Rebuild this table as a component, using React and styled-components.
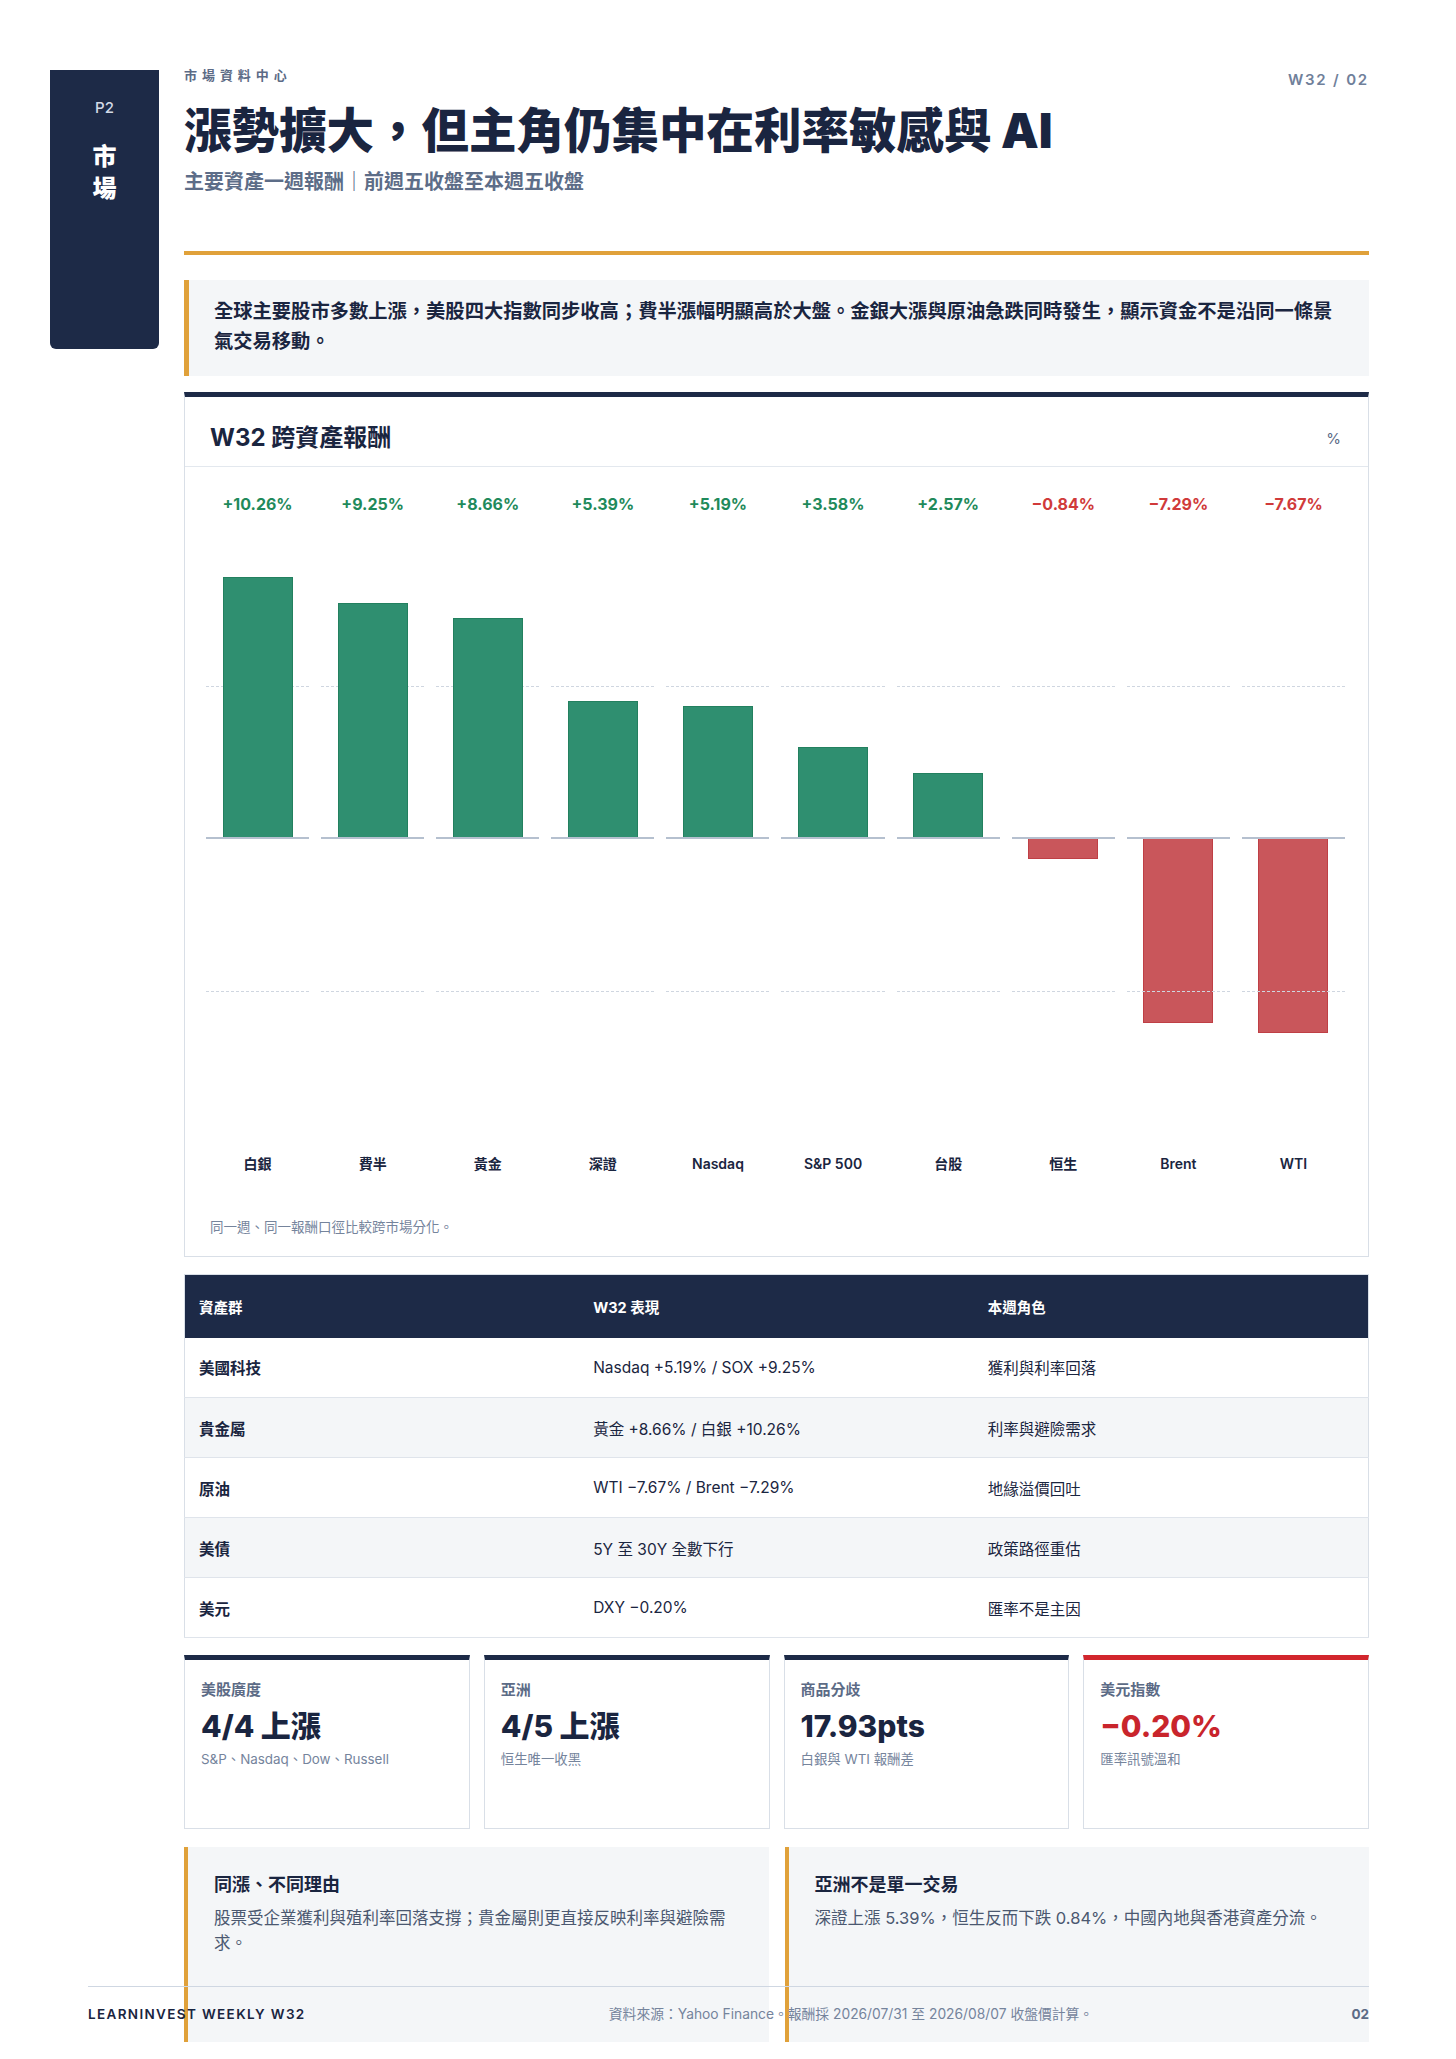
import React from "react";
import styled, { createGlobalStyle } from "styled-components";

const NAVY = "#1d2a47";
const INK = "#1a2540";
const SLATE = "#5c6b86";
const MUTED = "#75849c";
const GOLD = "#e0a13a";
const LINE = "#d9dfe7";
const SOFT = "#f4f6f8";
const GREEN_TXT = "#1f8a5b";
const RED_TXT = "#d03a3a";
const FONT = `"Inter", "Noto Sans CJK TC", "Noto Sans", sans-serif`;

const Global = createGlobalStyle`
  * { box-sizing: border-box; }
  html, body { margin: 0; padding: 0; background: #ffffff; }
  body { font-family: ${FONT}; color: ${INK}; }
`;

const Page = styled.div`
  position: relative;
  width: 1456px;
  height: 2059px;
  overflow: hidden;
  background: #fff;
`;

const Layout = styled.div`
  display: grid;
  grid-template-columns: 109px 1185px;
  column-gap: 25px;
  padding: 66px 0 0 50px;
  align-items: start;
`;

const Sidebar = styled.aside`
  margin-top: 4px;
  height: 279px;
  background: ${NAVY};
  border-radius: 0 0 6px 6px;
  display: flex;
  flex-direction: column;
  align-items: center;
  padding-top: 28px;
`;

const PageNo = styled.div`
  font-size: 15px;
  line-height: 20px;
  font-weight: 500;
  color: #d3dae6;
`;

const SectionName = styled.div`
  margin-top: 23px;
  display: flex;
  flex-direction: column;
  align-items: center;
  color: #fff;
  font-size: 24px;
  line-height: 32px;
  font-weight: 900;
`;

const Main = styled.main`
  display: flex;
  flex-direction: column;
`;

const Header = styled.header`
  display: flex;
  justify-content: space-between;
  align-items: flex-start;
  padding-bottom: 55px;
  border-bottom: 4px solid ${GOLD};
`;

const HeadText = styled.div`
  display: flex;
  flex-direction: column;
`;

const Kicker = styled.div`
  font-size: 13px;
  line-height: 18px;
  font-weight: 700;
  letter-spacing: 0.38em;
  color: ${SLATE};
`;

const Title = styled.h1`
  margin: 19px 0 0;
  font-size: 47.5px;
  line-height: 56px;
  font-weight: 900;
  color: ${INK};
`;

const Subtitle = styled.div`
  margin-top: 9px;
  font-size: 20px;
  line-height: 28px;
  font-weight: 700;
  color: #5d6d88;
`;

const Meta = styled.div`
  margin-top: 4px;
  font-size: 15px;
  line-height: 20px;
  font-weight: 600;
  letter-spacing: 0.12em;
  color: #70809a;
  white-space: pre;
`;

const Callout = styled.div`
  margin-top: 25px;
  background: ${SOFT};
  border-left: 5px solid ${GOLD};
  padding: 16px 25px 20px 25px;
  font-size: 19.3px;
  line-height: 30px;
  font-weight: 700;
  color: ${INK};
`;

const Card = styled.section`
  margin-top: 16px;
  border: 1px solid ${LINE};
  border-top: 5px solid ${NAVY};
  background: #fff;
`;

const CardHead = styled.div`
  display: flex;
  justify-content: space-between;
  align-items: center;
  padding: 25px 27px 12px 25px;
  border-bottom: 1px solid #e3e8ee;
`;

const CardTitle = styled.h2`
  margin: 0;
  font-size: 24px;
  line-height: 32px;
  font-weight: 700;
  color: ${INK};
`;

const Unit = styled.span`
  font-size: 15px;
  color: ${SLATE};
`;

const ChartBody = styled.div`
  padding: 26px 23px 20px 21px;
`;

const Columns = styled.div`
  display: grid;
  grid-template-columns: repeat(10, 1fr);
  column-gap: 12px;
`;

const Col = styled.div`
  display: flex;
  flex-direction: column;
  align-items: stretch;
`;

const ValueLabel = styled.div`
  text-align: center;
  font-size: 16px;
  line-height: 22px;
  font-weight: 700;
  color: ${(p) => (p.$neg ? RED_TXT : GREEN_TXT)};
`;

const Plot = styled.div`
  position: relative;
  margin-top: 18px;
  height: 610px;
  display: grid;
  grid-template-rows: 1fr 1fr;
`;

const Half = styled.div`
  display: flex;
  justify-content: center;
  align-items: ${(p) => (p.$lower ? "flex-start" : "flex-end")};
`;

const Grid = styled.div`
  position: absolute;
  left: 0;
  right: 0;
  top: ${(p) => p.$at}%;
  border-top: 1px dashed #cfd6e0;
  z-index: ${(p) => (p.$over ? 2 : 0)};
`;

const ZeroLine = styled.div`
  position: absolute;
  left: 0;
  right: 0;
  top: calc(50% - 1px);
  height: 2px;
  background: #b5c0cf;
  z-index: 3;
`;

const Bar = styled.div`
  position: relative;
  z-index: 1;
  width: 70px;
  background: ${(p) => (p.$neg ? "#c9565b" : "#2f8f70")};
  border: 1px solid ${(p) => (p.$neg ? "#bf3f45" : "#23805f")};
`;

const XLabel = styled.div`
  margin-top: 11px;
  text-align: center;
  font-size: 14px;
  line-height: 20px;
  font-weight: 600;
  color: ${INK};
`;

const Footnote = styled.div`
  margin: 44px 0 0 4px;
  font-size: 13.5px;
  line-height: 18px;
  color: ${MUTED};
`;

const Table = styled.table`
  margin-top: 17px;
  width: 100%;
  border-collapse: collapse;
  table-layout: fixed;
  border: 1px solid ${LINE};
`;

const Th = styled.th`
  height: 63px;
  background: ${NAVY};
  color: #fff;
  text-align: left;
  font-size: 14.5px;
  font-weight: 700;
  padding: 0 14px;
`;

const Tr = styled.tr`
  background: ${(p) => (p.$alt ? SOFT : "#fff")};
  border-bottom: 1px solid #dfe4eb;
`;

const Td = styled.td`
  height: 60px;
  padding: 0 14px;
  font-size: 15.5px;
  font-weight: ${(p) => (p.$strong ? 700 : 400)};
  color: ${INK};
`;

const KpiGrid = styled.div`
  margin-top: 17px;
  display: grid;
  grid-template-columns: repeat(4, 1fr);
  gap: 14px;
`;

const Kpi = styled.div`
  height: 174px;
  border: 1px solid ${LINE};
  border-top: 5px solid ${(p) => (p.$alert ? "#d2262d" : NAVY)};
  padding: 20px 16px 0;
  background: #fff;
`;

const KpiLabel = styled.div`
  font-size: 15px;
  line-height: 20px;
  font-weight: 600;
  color: ${SLATE};
`;

const KpiValue = styled.div`
  margin-top: 8px;
  font-size: 30px;
  line-height: 36px;
  font-weight: 800;
  color: ${(p) => (p.$alert ? "#c9252c" : INK)};
`;

const KpiSub = styled.div`
  margin-top: 6px;
  font-size: 13.4px;
  line-height: 18px;
  color: ${MUTED};
`;

const NoteGrid = styled.div`
  margin-top: 18px;
  display: grid;
  grid-template-columns: 1fr 1fr;
  gap: 16px;
`;

const Note = styled.div`
  min-height: 195px;
  background: ${SOFT};
  border-left: 4px solid ${GOLD};
  padding: 26px 28px 26px 26px;
`;

const NoteTitle = styled.div`
  font-size: 18px;
  line-height: 24px;
  font-weight: 700;
  color: ${INK};
`;

const NoteBody = styled.div`
  margin-top: 9px;
  font-size: 16.5px;
  line-height: 24.75px;
  color: #4b5870;
`;

const Footer = styled.footer`
  position: absolute;
  left: 88px;
  right: 87px;
  bottom: 0;
  height: 73px;
  border-top: 1px solid #cfd7e2;
  padding-top: 18px;
  display: flex;
  justify-content: space-between;
  align-items: flex-start;
  font-size: 13.5px;
  line-height: 18px;
  z-index: 5;
`;

const Brand = styled.div`
  font-weight: 600;
  letter-spacing: 0.1em;
  color: ${INK};
`;

const Source = styled.div`
  margin-left: 45px;
  font-size: 13.8px;
  color: ${MUTED};
`;

const FootPage = styled.div`
  font-weight: 700;
  color: ${SLATE};
`;

const SCALE = 305 / 12;

const data = [
  { name: "白銀", v: 10.26 },
  { name: "費半", v: 9.25 },
  { name: "黃金", v: 8.66 },
  { name: "深證", v: 5.39 },
  { name: "Nasdaq", v: 5.19 },
  { name: "S&P 500", v: 3.58 },
  { name: "台股", v: 2.57 },
  { name: "恒生", v: -0.84 },
  { name: "Brent", v: -7.29 },
  { name: "WTI", v: -7.67 },
];

const fmt = (v) => (v >= 0 ? `+${v.toFixed(2)}%` : `−${Math.abs(v).toFixed(2)}%`);

const rows = [
  ["美國科技", "Nasdaq +5.19% / SOX +9.25%", "獲利與利率回落"],
  ["貴金屬", "黃金 +8.66% / 白銀 +10.26%", "利率與避險需求"],
  ["原油", "WTI −7.67% / Brent −7.29%", "地緣溢價回吐"],
  ["美債", "5Y 至 30Y 全數下行", "政策路徑重估"],
  ["美元", "DXY −0.20%", "匯率不是主因"],
];

const kpis = [
  { label: "美股廣度", value: "4/4 上漲", sub: "S&P、Nasdaq、Dow、Russell" },
  { label: "亞洲", value: "4/5 上漲", sub: "恒生唯一收黑" },
  { label: "商品分歧", value: "17.93pts", sub: "白銀與 WTI 報酬差" },
  { label: "美元指數", value: "−0.20%", sub: "匯率訊號溫和", alert: true },
];

export default function App() {
  return (
    <Page>
      <Global />
      <Layout>
        <Sidebar>
          <PageNo>P2</PageNo>
          <SectionName>
            <span>市</span>
            <span>場</span>
          </SectionName>
        </Sidebar>
        <Main>
          <Header>
            <HeadText>
              <Kicker>市場資料中心</Kicker>
              <Title>漲勢擴大，但主角仍集中在利率敏感與 AI</Title>
              <Subtitle>主要資產一週報酬｜前週五收盤至本週五收盤</Subtitle>
            </HeadText>
            <Meta>W32 / 02</Meta>
          </Header>

          <Callout>
            全球主要股市多數上漲，美股四大指數同步收高；費半漲幅明顯高於大盤。金銀大漲與原油急跌同時發生，顯示資金不是沿同一條景氣交易移動。
          </Callout>

          <Card>
            <CardHead>
              <CardTitle>W32 跨資產報酬</CardTitle>
              <Unit>%</Unit>
            </CardHead>
            <ChartBody>
              <Columns>
                {data.map((d) => {
                  const neg = d.v < 0;
                  const h = Math.abs(d.v) * SCALE;
                  return (
                    <Col key={d.name}>
                      <ValueLabel $neg={neg}>{fmt(d.v)}</ValueLabel>
                      <Plot>
                        <Grid $at={25} />
                        <Grid $at={75} $over={neg} />
                        <Half>{!neg && <Bar style={{ height: h }} />}</Half>
                        <Half $lower>{neg && <Bar $neg style={{ height: h }} />}</Half>
                        <ZeroLine />
                      </Plot>
                      <XLabel>{d.name}</XLabel>
                    </Col>
                  );
                })}
              </Columns>
              <Footnote>同一週、同一報酬口徑比較跨市場分化。</Footnote>
            </ChartBody>
          </Card>

          <Table>
            <thead>
              <tr>
                <Th>資產群</Th>
                <Th>W32 表現</Th>
                <Th>本週角色</Th>
              </tr>
            </thead>
            <tbody>
              {rows.map((r, i) => (
                <Tr key={r[0]} $alt={i % 2 === 1}>
                  <Td $strong>{r[0]}</Td>
                  <Td>{r[1]}</Td>
                  <Td>{r[2]}</Td>
                </Tr>
              ))}
            </tbody>
          </Table>

          <KpiGrid>
            {kpis.map((k) => (
              <Kpi key={k.label} $alert={k.alert}>
                <KpiLabel>{k.label}</KpiLabel>
                <KpiValue $alert={k.alert}>{k.value}</KpiValue>
                <KpiSub>{k.sub}</KpiSub>
              </Kpi>
            ))}
          </KpiGrid>

          <NoteGrid>
            <Note>
              <NoteTitle>同漲、不同理由</NoteTitle>
              <NoteBody>股票受企業獲利與殖利率回落支撐；貴金屬則更直接反映利率與避險需求。</NoteBody>
            </Note>
            <Note>
              <NoteTitle>亞洲不是單一交易</NoteTitle>
              <NoteBody>深證上漲 5.39%，恒生反而下跌 0.84%，中國內地與香港資產分流。</NoteBody>
            </Note>
          </NoteGrid>
        </Main>
      </Layout>
      <Footer>
        <Brand>LEARNINVEST WEEKLY W32</Brand>
        <Source>資料來源：Yahoo Finance。報酬採 2026/07/31 至 2026/08/07 收盤價計算。</Source>
        <FootPage>02</FootPage>
      </Footer>
    </Page>
  );
}
